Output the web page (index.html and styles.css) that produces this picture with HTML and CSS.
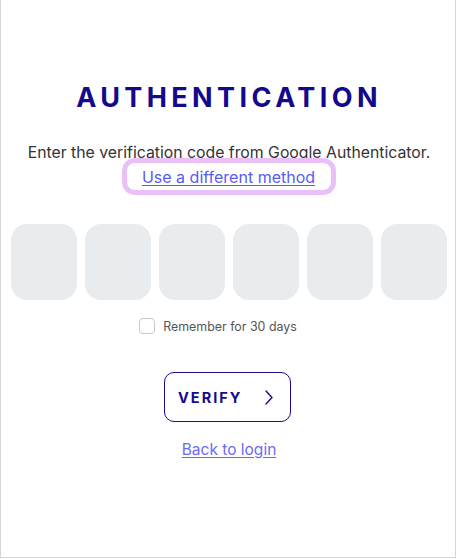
FILE: index.html
```html
<!DOCTYPE html>
<html lang="en">
<head>
<meta charset="utf-8">
<title>Authentication</title>
<link rel="stylesheet" href="styles.css">
</head>
<body>
<main class="card">
  <h1 class="title">AUTHENTICATION</h1>
  <p class="desc">Enter the verification code from Google Authenticator.</p>
  <div class="alt"><a class="alt-link" href="#">Use a different method</a></div>
  <div class="code-row">
    <input class="code-box" type="text" maxlength="1" aria-label="Digit 1">
    <input class="code-box" type="text" maxlength="1" aria-label="Digit 2">
    <input class="code-box" type="text" maxlength="1" aria-label="Digit 3">
    <input class="code-box" type="text" maxlength="1" aria-label="Digit 4">
    <input class="code-box" type="text" maxlength="1" aria-label="Digit 5">
    <input class="code-box" type="text" maxlength="1" aria-label="Digit 6">
  </div>
  <label class="remember"><span class="check"></span><span class="remember-text">Remember for 30 days</span></label>
  <div class="actions">
    <button class="verify" type="button"><span class="verify-text">VERIFY</span><svg class="chev" width="8" height="15" viewBox="0 0 8 15"><polyline points="1,1 7,7.5 1,14" fill="none" stroke="#1a0d8e" stroke-width="1.4" stroke-linecap="round" stroke-linejoin="round"/></svg></button>
  </div>
  <div class="back"><a class="back-link" href="#">Back to login</a></div>
</main>
</body>
</html>
```
FILE: styles.css
```css
html, body {
  margin: 0;
  padding: 0;
  background: #ffffff;
}
body {
  font-family: Inter, "Noto Sans", sans-serif;
  color: #333333;
}
.card {
  box-sizing: border-box;
  width: 456px;
  height: 558px;
  border: 1px solid #d6d6d6;
  border-top: none;
  padding: 82px 8px 0 10px;
  text-align: center;
}
.title {
  margin: 0;
  font-size: 27px;
  line-height: 32px;
  font-weight: 700;
  letter-spacing: 4.4px;
  color: #14098c;
}
.desc {
  margin: 27px 0 0;
  font-size: 15.8px;
  line-height: 24px;
  color: #333333;
}
.alt {
  font-size: 16px;
  line-height: 24px;
}
.alt-link {
  color: #5a5af2;
  text-decoration: underline;
  text-underline-offset: 2px;
  padding: 4px 16px 3px 15px;
  border-radius: 8px;
  box-shadow: 0 0 0 5px #e9c1f8;
}
.code-row {
  display: flex;
  gap: 8px;
  margin-top: 35px;
}
.code-box {
  box-sizing: border-box;
  width: 66px;
  height: 76px;
  border: none;
  border-radius: 16px;
  background: #e9ecef;
  margin: 0;
  padding: 0;
}
.remember {
  display: flex;
  align-items: center;
  justify-content: center;
  gap: 8px;
  margin-top: 18px;
  height: 16px;
  padding-right: 22px;
}
.check {
  box-sizing: border-box;
  width: 16px;
  height: 16px;
  border: 1px solid #c6c8cc;
  border-radius: 4px;
  background: #fff;
}
.remember-text {
  font-size: 12.4px;
  color: #555555;
}
.actions {
  display: flex;
  justify-content: center;
  margin-top: 38px;
  padding-right: 3px;
}
.verify {
  box-sizing: border-box;
  display: flex;
  align-items: center;
  width: 127px;
  height: 50px;
  padding: 0 0 0 13px;
  border: 1px solid #1a0d8e;
  border-radius: 10px;
  background: #ffffff;
  font-family: Inter, "Noto Sans", sans-serif;
  cursor: pointer;
}
.verify-text {
  font-size: 14.5px;
  font-weight: 700;
  letter-spacing: 2px;
  color: #14098c;
  width: 87px;
  text-align: left;
}
.chev {
  display: block;
}
.back {
  margin-top: 16px;
  font-size: 15.5px;
  line-height: 24px;
}
.back-link {
  color: #6a6af6;
  text-decoration: underline;
  text-underline-offset: 2px;
}
```
